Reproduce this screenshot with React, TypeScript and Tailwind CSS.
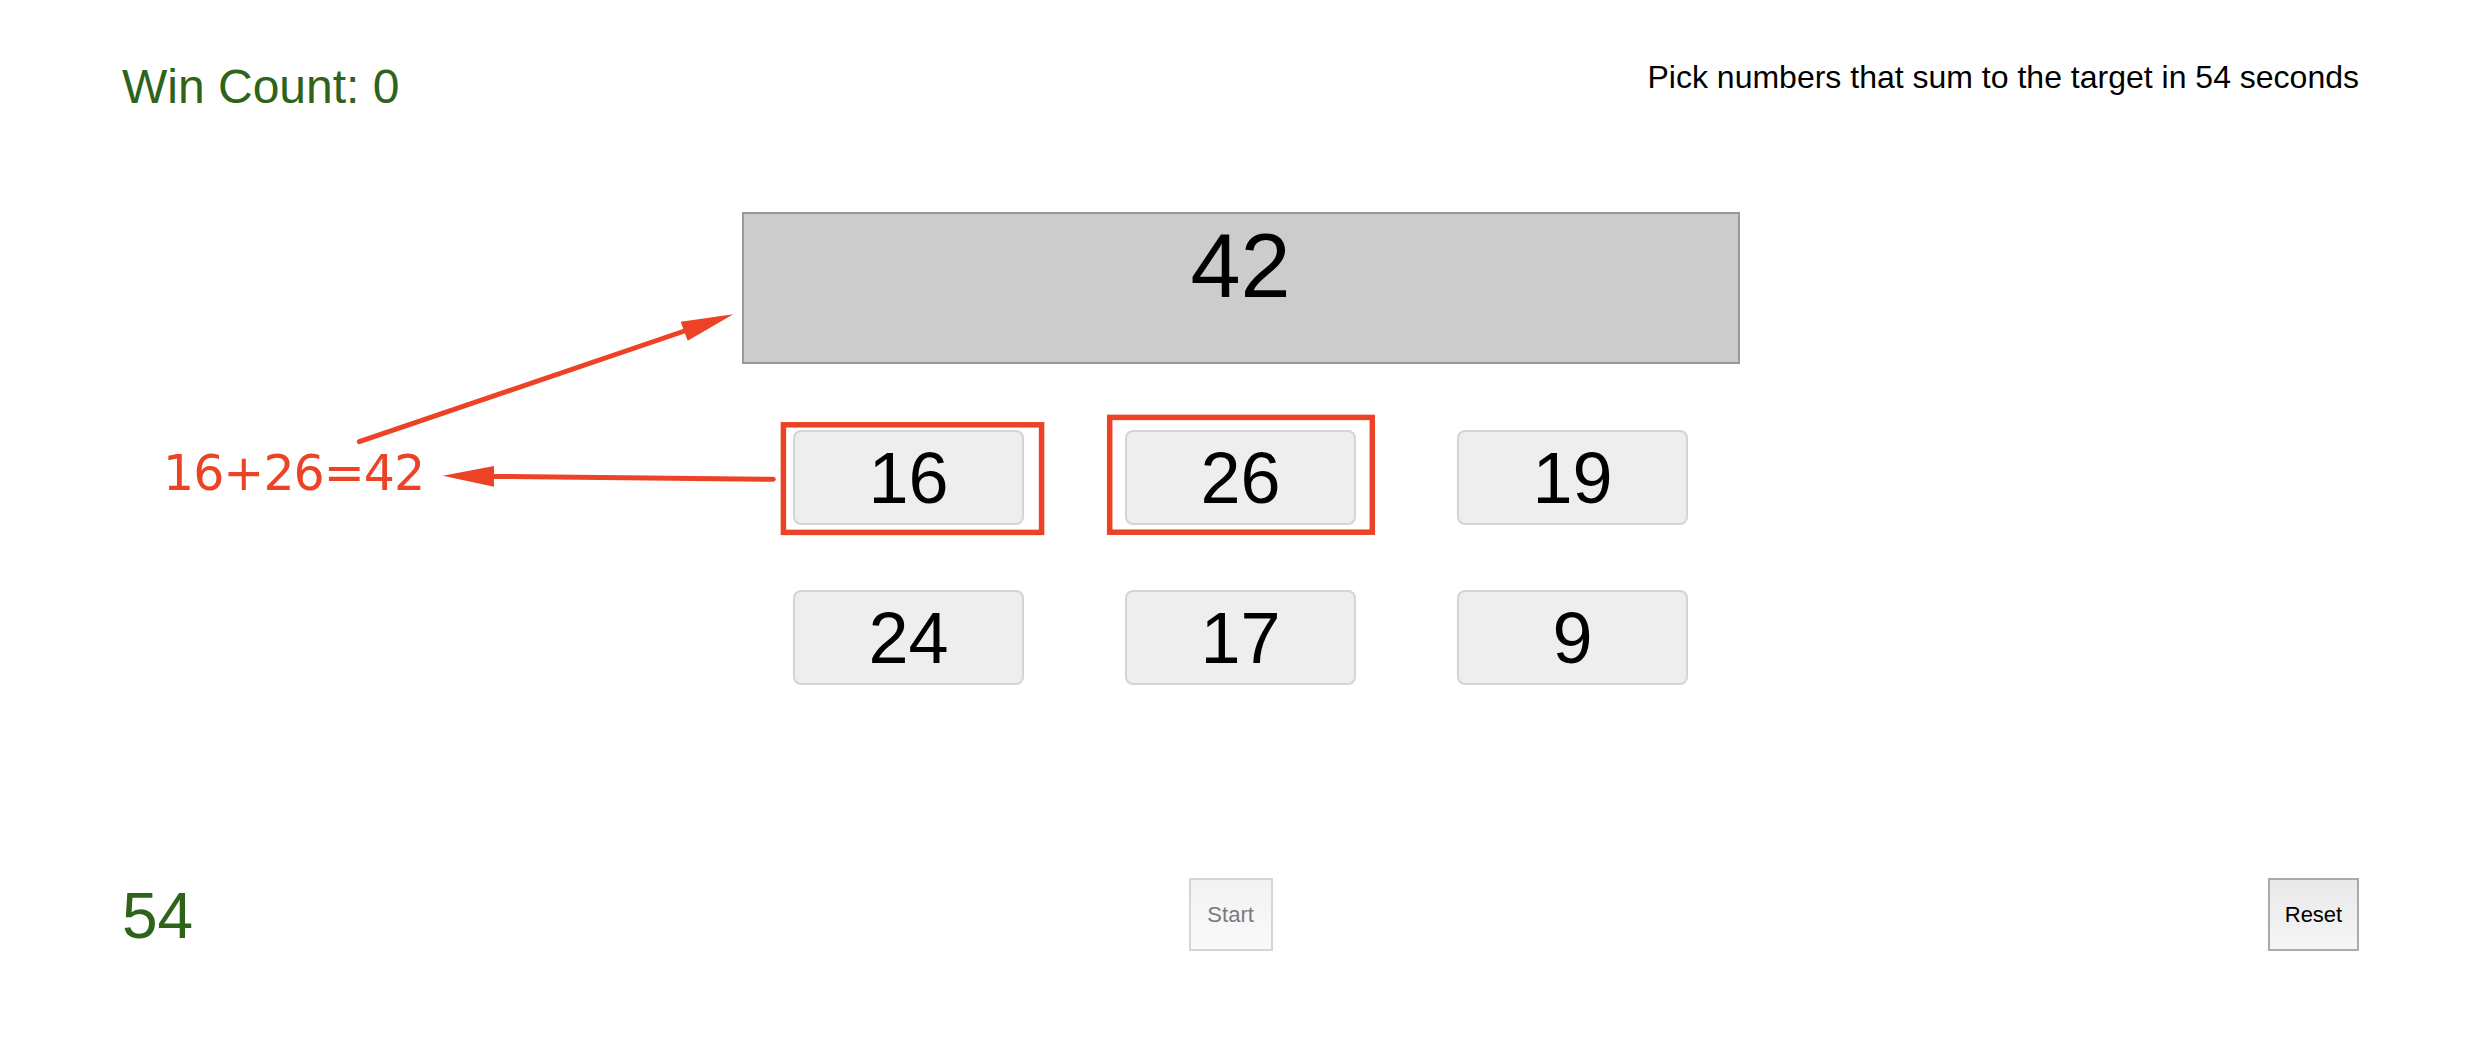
export default function App() {
  const nums = [16, 26, 19, 24, 17, 9];
  return (
    <div className="relative h-[1042px] w-[2480px] overflow-hidden bg-white font-['Liberation_Sans',Arial,sans-serif]">
      <div className="pl-[122px] pr-[121px] pt-[59px]">
        <div className="flex items-start justify-between">
          <div className="text-[48px] leading-[55px] text-[#2d641a]">Win Count: 0</div>
          <div className="text-[32px] leading-[37px] text-black">
            Pick numbers that sum to the target in 54 seconds
          </div>
        </div>

        <div className="mx-auto mt-[98px] h-[152px] w-[998px] border-2 border-[#999999] bg-[#cccccc] pt-[7px] text-center text-[90px] leading-none text-black">
          42
        </div>

        <div className="mx-auto mt-[66px] grid w-[895px] grid-cols-[231px_231px_231px] gap-x-[101px] gap-y-[65px]">
          {nums.map((n) => (
            <button
              key={n}
              className="flex h-[95px] w-[231px] items-center justify-center rounded-[8px] border-2 border-[#d4d4d4] bg-[#eeeeee] text-[72px] leading-none text-black"
            >
              {n}
            </button>
          ))}
        </div>

        <div className="mt-[193px] flex items-start justify-between">
          <div className="pt-px text-[64px] leading-[74px] text-[#2d641a]">54</div>
          <button className="flex h-[73px] w-[84px] items-center justify-center border-2 border-[#d6d6d6] bg-linear-to-b from-[#f2f2f2] to-[#fafafa] text-[22px] text-[#7b7b7b]">
            Start
          </button>
          <button className="flex h-[73px] w-[91px] items-center justify-center border-2 border-[#aaaaaa] bg-linear-to-b from-[#e9e9e9] to-[#f5f5f5] text-[22px] text-black">
            Reset
          </button>
        </div>
      </div>

      <svg
        className="pointer-events-none absolute left-0 top-0"
        width="2480"
        height="1042"
        viewBox="0 0 2480 1042"
      >
        <rect x="783.4" y="424.8" width="258.2" height="107.6" fill="none" stroke="#ec4326" strokeWidth="5.5" />
        <rect x="1109.7" y="417.4" width="262.6" height="114.8" fill="none" stroke="#ec4326" strokeWidth="5.5" />
        <line x1="359.3" y1="441.7" x2="686" y2="330.5" stroke="#ec4326" strokeWidth="5" strokeLinecap="round" />
        <polygon points="733.3,314.3 680.7,321.7 687.7,340.7" fill="#ec4326" />
        <line x1="773.3" y1="479.3" x2="492" y2="476.4" stroke="#ec4326" strokeWidth="5" strokeLinecap="round" />
        <polygon points="442.7,475.7 494,466 494,486.7" fill="#ec4326" />
      </svg>

      <div className="absolute left-[163px] top-[449px] font-['DejaVu_Sans',sans-serif] text-[49px] leading-none tracking-[-1px] text-[#ec4326]">
        16+26=42
      </div>
    </div>
  );
}
